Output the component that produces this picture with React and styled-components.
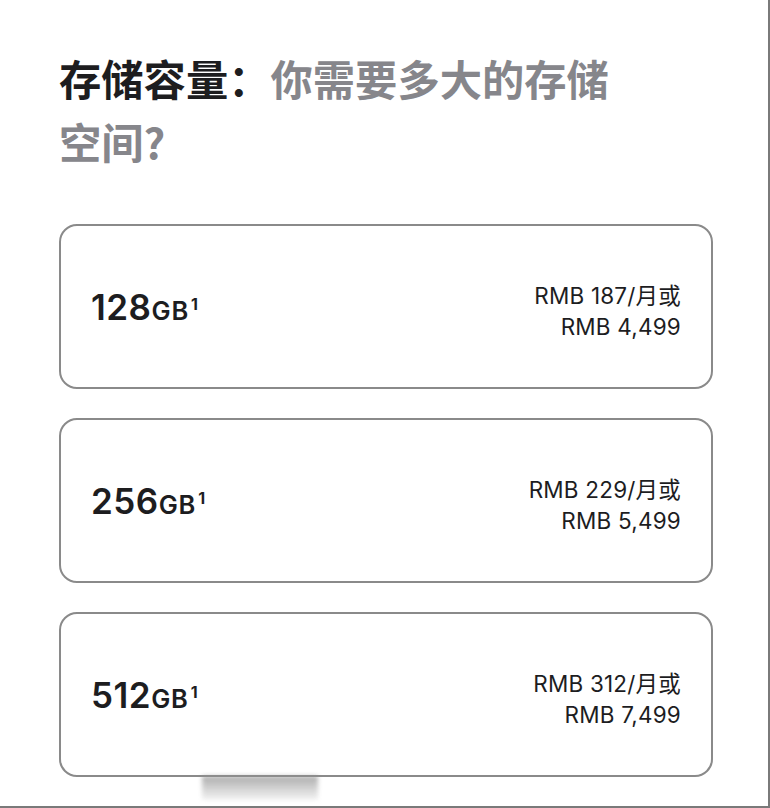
import React from 'react';
import styled, { createGlobalStyle } from 'styled-components';

const GlobalStyle = createGlobalStyle`
  html, body {
    margin: 0;
    padding: 0;
    background: #fff;
  }
  body {
    font-family: Inter, 'Noto Sans CJK SC', sans-serif;
    color: #1d1d1f;
  }
`;

const Frame = styled.div`
  position: relative;
  box-sizing: border-box;
  width: 770px;
  height: 808px;
  overflow: hidden;
  border-right: 2px solid #7a7a7a;
  border-bottom: 2px solid #7a7a7a;
  padding: 46px 55px 0 59px;
`;

const Heading = styled.h2`
  margin: 0;
  max-width: 580px;
  font-size: 42.3px;
  line-height: 63px;
  font-weight: 700;
  font-family: 'Noto Sans CJK SC', sans-serif;
  color: #1d1d1f;
`;

const Muted = styled.span`
  color: #86868b;
`;

const Options = styled.div`
  display: flex;
  flex-direction: column;
  gap: 29px;
  margin-top: 52px;
`;

const Option = styled.div`
  box-sizing: border-box;
  height: 165px;
  border: 2px solid #8a8a8a;
  border-radius: 18px;
  padding: 0 30px;
  display: flex;
  align-items: center;
  justify-content: space-between;
`;

const Capacity = styled.div`
  font-size: 35px;
  font-weight: 600;
  letter-spacing: 0.5px;
  color: #1d1d1f;
`;

const Unit = styled.span`
  font-size: 25.5px;
  letter-spacing: 0.8px;
`;

const Footnote = styled.sup`
  font-size: 16px;
  font-weight: 700;
  vertical-align: 10px;
  margin-left: 2px;
`;

const Price = styled.div`
  text-align: right;
  font-size: 22.5px;
  line-height: 31px;
  margin-top: 8px;
  letter-spacing: 0.2px;
  color: #1d1d1f;
`;

const Watermark = styled.div`
  position: absolute;
  left: 202px;
  top: 776px;
  width: 116px;
  height: 24px;
  background: linear-gradient(180deg, #8a8a8a 0%, #c4c4c4 55%, #eeeeee 100%);
  filter: blur(2px);
  opacity: 0.7;
`;

const options = [
  { size: '128', monthly: '187', total: '4,499' },
  { size: '256', monthly: '229', total: '5,499' },
  { size: '512', monthly: '312', total: '7,499' },
];

export default function App() {
  return (
    <>
      <GlobalStyle />
      <Frame>
        <Heading>
          存储容量：<Muted>你需要多大的存储空间?</Muted>
        </Heading>
        <Options>
          {options.map((o) => (
            <Option key={o.size}>
              <Capacity>
                {o.size}
                <Unit>GB</Unit>
                <Footnote>1</Footnote>
              </Capacity>
              <Price>
                RMB {o.monthly}/月或
                <br />
                RMB {o.total}
              </Price>
            </Option>
          ))}
        </Options>
        <Watermark />
      </Frame>
    </>
  );
}
